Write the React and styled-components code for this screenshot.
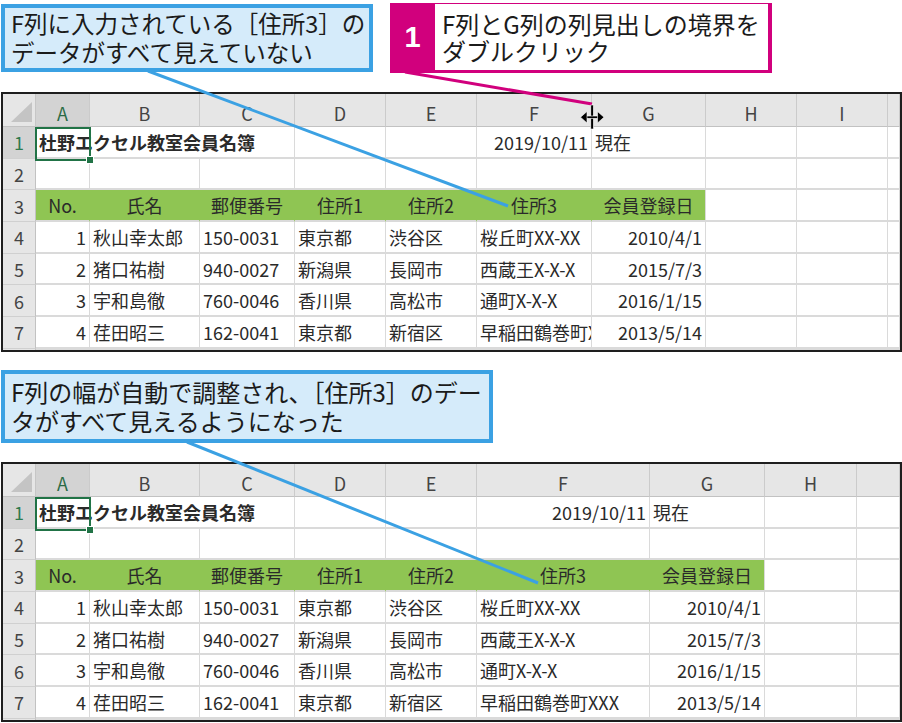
import React from 'react';
import styled, { createGlobalStyle } from 'styled-components';

const GlobalStyle = createGlobalStyle`
  body {
    margin: 0;
    background: #fff;
    font-family: "Noto Sans CJK JP", "Noto Sans", sans-serif;
  }
`;

const BLUE = '#3ba1e3';
const MAGENTA = '#d1007d';
const GREEN = '#8fc553';
const GRID_LINE = '#dadada';

const Page = styled.div`
  position: relative;
  width: 902px;
  height: 723px;
  box-sizing: border-box;
  padding: 3px 0 0 1px;
  display: flex;
  flex-direction: column;
  overflow: hidden;
`;

const CalloutRow = styled.div`
  display: flex;
  align-items: flex-start;
  gap: 17px;
`;

const Note = styled.div`
  box-sizing: border-box;
  width: ${props => props.width}px;
  margin-top: ${props => props.top || 0}px;
  padding: ${props => props.padTop}px 0 0 6px;
  height: ${props => props.height}px;
  border: 4px solid ${BLUE};
  background: #d5ebfa;
  color: #1b1b1b;
  font-size: ${props => props.size}px;
  line-height: 29px;
  white-space: nowrap;
`;

const Step = styled.div`
  box-sizing: border-box;
  width: 382px;
  height: 70px;
  display: flex;
  background: ${MAGENTA};
  padding: 1px 4px 3px 0;
`;

const StepNumber = styled.div`
  width: 45px;
  display: flex;
  align-items: center;
  justify-content: center;
  color: #fff;
  font-family: "Liberation Sans", Arial, sans-serif;
  font-weight: 700;
  font-size: 29px;
`;

const StepText = styled.div`
  flex: 1;
  background: #fff;
  padding: 6px 0 0 7px;
  color: #1b1b1b;
  font-size: 24px;
  line-height: 27px;
  white-space: nowrap;
`;

const Grid = styled.div`
  position: relative;
  box-sizing: border-box;
  width: 901px;
  height: 260px;
  margin-top: ${props => props.top}px;
  border: 2px solid #1e1e1e;
  display: grid;
  grid-template-columns: ${props => props.cols};
  grid-template-rows: 33px repeat(7, 31.7px) 1fr;
  overflow: hidden;
  background: #fff;
  font-size: 18px;
`;

const Corner = styled.div`
  position: relative;
  background: #e6e6e6;
  border-right: 1px solid #c6c6c6;
  border-bottom: 1px solid #c2c2c2;
  &::after {
    content: '';
    position: absolute;
    right: 3px;
    bottom: 4px;
    width: 21px;
    height: 20px;
    background: #c4c4c4;
    clip-path: polygon(100% 0, 100% 100%, 0 100%);
  }
`;

const ColHead = styled.div`
  box-sizing: border-box;
  display: flex;
  align-items: center;
  justify-content: center;
  padding-top: 5px;
  background: ${props => (props.active ? '#d3d3d3' : '#e6e6e6')};
  color: ${props => (props.active ? '#2a6b45' : '#444')};
  border-right: 1px solid #cbcbcb;
  border-bottom: 1px solid #c2c2c2;
`;

const RowHead = styled.div`
  box-sizing: border-box;
  display: flex;
  align-items: center;
  justify-content: center;
  background: ${props => (props.active ? '#d3d3d3' : '#e6e6e6')};
  color: ${props => (props.active ? '#2e7a4d' : '#444')};
  border-right: 1px solid #c2c2c2;
  border-bottom: 1px solid #d0d0d0;
`;

const Cell = styled.div`
  box-sizing: border-box;
  display: flex;
  align-items: center;
  justify-content: ${props => ({ right: 'flex-end', center: 'center' }[props.align] || 'flex-start')};
  grid-column: span ${props => props.span || 1};
  padding: 0 3px;
  overflow: hidden;
  white-space: nowrap;
  background: ${props => (props.fill ? GREEN : '#fff')};
  border-right: 1px solid ${props => (props.fill && !props.edge ? GREEN : GRID_LINE)};
  border-bottom: 2px solid ${GRID_LINE};
  color: #2a2a2a;
  font-weight: ${props => (props.bold ? 700 : 400)};
`;

const Selection = styled.div`
  position: absolute;
  left: 32px;
  top: 33px;
  width: 56px;
  height: 34px;
  box-sizing: border-box;
  border: 2px solid #217346;
  &::after {
    content: '';
    position: absolute;
    right: -5px;
    bottom: -5px;
    width: 6px;
    height: 6px;
    background: #217346;
    border: 1px solid #fff;
  }
`;

const Overlay = styled.svg`
  position: absolute;
  left: 0;
  top: 0;
  pointer-events: none;
`;

const header = ['No.', '氏名', '郵便番号', '住所1', '住所2', '住所3', '会員登録日'];

const people = [
  ['1', '秋山幸太郎', '150-0031', '東京都', '渋谷区', '桜丘町XX-XX', '2010/4/1'],
  ['2', '猪口祐樹', '940-0027', '新潟県', '長岡市', '西蔵王X-X-X', '2015/7/3'],
  ['3', '宇和島徹', '760-0046', '香川県', '高松市', '通町X-X-X', '2016/1/15'],
  ['4', '荏田昭三', '162-0041', '東京都', '新宿区', '早稲田鶴巻町XXX', '2013/5/14'],
];

const rows = [
  [{ t: '杜野エクセル教室会員名簿', bold: true, span: 3 }, {}, {}, { t: '2019/10/11', align: 'right' }, { t: '現在' }],
  [],
  header.map((t, i) => ({ t, align: 'center', fill: true, edge: i === header.length - 1 })),
  ...people.map(p => p.map((t, i) => ({ t, align: i === 0 || i === 6 ? 'right' : 'left' }))),
];

function Sheet({ widths, top }) {
  const letters = 'ABCDEFGHI'.slice(0, widths.length).split('');
  const cols = `33px ${widths.map(w => `${w}px`).join(' ')} 1fr`;
  const pad = row => {
    const used = row.reduce((n, c) => n + (c.span || 1), 0);
    return [...row, ...Array.from({ length: letters.length - used + 1 }, () => ({}))];
  };
  return (
    <Grid cols={cols} top={top}>
      <Corner />
      {letters.map((l, i) => <ColHead key={l} active={i === 0}>{l}</ColHead>)}
      <ColHead />
      {[...rows, []].map((row, r) => (
        <React.Fragment key={r}>
          <RowHead active={r === 0}>{r < rows.length ? r + 1 : ''}</RowHead>
          {pad(row).map((c, i) => (
            <Cell key={i} align={c.align} span={c.span} fill={c.fill} edge={c.edge} bold={c.bold}>
              {c.t}
            </Cell>
          ))}
        </React.Fragment>
      ))}
      <Selection />
    </Grid>
  );
}

export default function App() {
  return (
    <Page>
      <GlobalStyle />
      <CalloutRow>
        <Note width={372} height={68} top={1} padTop={1} size={23.5}>
          F列に入力されている［住所3］の<br />データがすべて見えていない
        </Note>
        <Step>
          <StepNumber>1</StepNumber>
          <StepText>
            F列とG列の列見出しの境界を<br />ダブルクリック
          </StepText>
        </Step>
      </CalloutRow>
      <Sheet widths={[54, 110, 95, 91, 91, 115, 114, 91, 91]} top={19} />
      <Note width={492} height={73} top={18} padTop={3} size={24}>
        F列の幅が自動で調整され、［住所3］のデー<br />タがすべて見えるようになった
      </Note>
      <Sheet widths={[54, 110, 95, 91, 91, 173, 115, 92]} top={19} />
      <Overlay width="902" height="723" viewBox="0 0 902 723">
        <line x1="148" y1="71" x2="508" y2="206" stroke={BLUE} strokeWidth="3" />
        <line x1="187" y1="442" x2="538" y2="583" stroke={BLUE} strokeWidth="3" />
        <line x1="405" y1="72" x2="592" y2="104" stroke={MAGENTA} strokeWidth="3" />
        <g fill="#000" stroke="#fff" strokeWidth="0.6">
          <rect x="590.8" y="105" width="2.6" height="24" />
          <rect x="585" y="116" width="14" height="2.4" />
          <polygon points="580.5,117.2 587,111.5 587,123" />
          <polygon points="604,117.2 597.5,111.5 597.5,123" />
        </g>
      </Overlay>
    </Page>
  );
}
